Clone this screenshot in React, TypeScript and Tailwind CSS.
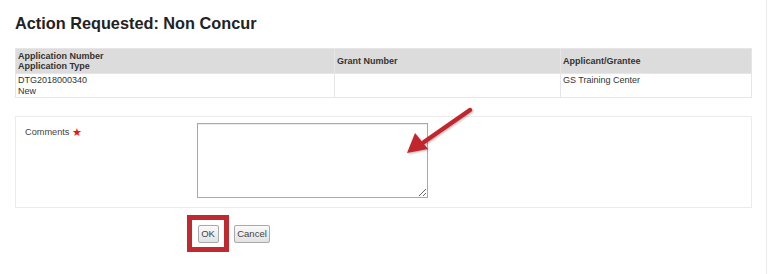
export default function App() {
    return (
        <div className="relative h-[274px] w-[768px] overflow-hidden bg-white font-['Liberation_Sans',Arial,sans-serif] text-[#333]">
            {/* thin scrollbar edge on the right */}
            <div className="absolute right-[1px] top-0 h-full w-[1px] bg-[#ececec]" />

            <div className="px-[15px] pt-[13px]">
                <h1 className="text-[16.3px] font-bold leading-[20px] text-[#222]">
                    Action Requested: Non Concur
                </h1>

                <table className="mt-[15px] w-[737px] border-collapse border border-[#e0e0e0] text-[9px] leading-[10.5px]">
                    <thead>
                        <tr className="h-[25px] bg-[#dcdcdc]">
                            <th className="w-[319px] border border-[#e6e6e6] px-[2px] py-[1px] text-left align-middle font-bold">
                                Application Number
                                <br />
                                Application Type
                            </th>
                            <th className="w-[226px] border border-[#e6e6e6] px-[2px] text-left align-middle font-bold">
                                Grant Number
                            </th>
                            <th className="border border-[#e6e6e6] px-[2px] text-left align-middle font-bold">
                                Applicant/Grantee
                            </th>
                        </tr>
                    </thead>
                    <tbody>
                        <tr>
                            <td className="h-[24px] border border-[#e6e6e6] px-[2px] pt-[1px] align-top">
                                DTG2018000340
                                <br />
                                New
                            </td>
                            <td className="border border-[#e6e6e6] px-[2px] align-top" />
                            <td className="border border-[#e6e6e6] px-[2px] pt-[1px] align-top">
                                GS Training Center
                            </td>
                        </tr>
                    </tbody>
                </table>

                <div className="mt-[18px] flex h-[92px] w-[737px] border border-[#ebebeb] pl-[9px] pt-[6px]">
                    <div className="flex w-[172px] items-start gap-[3px] pt-[4px] text-[9.2px] leading-[11px] text-[#444]">
                        <span>Comments</span>
                        <span className="text-[11px] leading-[10px] text-[#e8161b]">★</span>
                    </div>
                    <textarea className="h-[75px] w-[231px] resize border border-[#a9a9a9] bg-white shadow-[inset_0_1px_1px_rgba(0,0,0,0.08)]" />
                </div>

                <div className="mt-[7px] flex items-center pl-[172px]">
                    <div className="flex h-[37px] w-[42px] items-center justify-center border-[5px] border-[#be2a30]">
                        <button className="h-[18px] w-[21px] rounded-[2px] border border-[#a9a9a9] bg-gradient-to-b from-[#fafafa] to-[#e2e2e2] text-[9.5px] leading-[16px] text-[#444]">
                            OK
                        </button>
                    </div>
                    <button className="ml-[5px] h-[18px] w-[36px] rounded-[2px] border border-[#a9a9a9] bg-gradient-to-b from-[#fafafa] to-[#e2e2e2] text-[9.5px] leading-[16px] text-[#444]">
                        Cancel
                    </button>
                </div>
            </div>

            {/* annotation arrow pointing at the comments box */}
            <svg
                className="absolute left-[400px] top-[104px]"
                width="80"
                height="56"
                viewBox="0 0 80 56"
            >
                <defs>
                    <filter id="sh" x="-20%" y="-20%" width="140%" height="140%">
                        <feDropShadow dx="1" dy="1" stdDeviation="1" floodColor="#000" floodOpacity="0.3" />
                    </filter>
                </defs>
                <g filter="url(#sh)">
                    <line x1="70" y1="6" x2="24" y2="38" stroke="#c1272d" strokeWidth="4.5" strokeLinecap="round" />
                    <polygon points="7,49 15,29 28,45" fill="#c1272d" />
                </g>
            </svg>
        </div>
    );
}
